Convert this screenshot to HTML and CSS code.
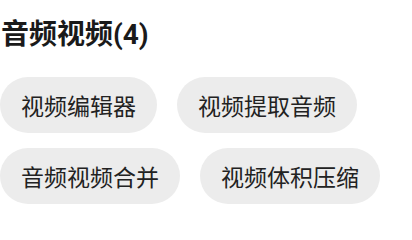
FILE: index.html
```html
<!DOCTYPE html>
<html lang="zh-CN">
<head>
<meta charset="utf-8">
<link rel="stylesheet" href="styles.css">
</head>
<body>
<section class="group">
  <h2 class="title">音频视频(4)</h2>
  <div class="chips">
    <span class="chip">视频编辑器</span>
    <span class="chip">视频提取音频</span>
    <span class="chip">音频视频合并</span>
    <span class="chip">视频体积压缩</span>
  </div>
</section>
</body>
</html>
```
FILE: styles.css
```css
html, body {
  margin: 0;
  padding: 0;
  background: #ffffff;
}
body {
  font-family: Roboto, "Noto Sans CJK SC", "Noto Sans", sans-serif;
  color: #1f1f1f;
}
.group {
  padding: 0 0 0 1px;
}
.title {
  margin: 0;
  padding-top: 18px;
  font-size: 28px;
  line-height: 34px;
  font-weight: 700;
  color: #1a1a1a;
}
.chips {
  display: flex;
  flex-wrap: wrap;
  column-gap: 20px;
  row-gap: 15px;
  margin-top: 25px;
  margin-left: -1px;
}
.chip {
  display: inline-flex;
  align-items: center;
  height: 56px;
  padding: 0 21px;
  border-radius: 28px;
  background: #ececec;
  font-size: 23px;
  color: #222222;
  white-space: nowrap;
}
```
